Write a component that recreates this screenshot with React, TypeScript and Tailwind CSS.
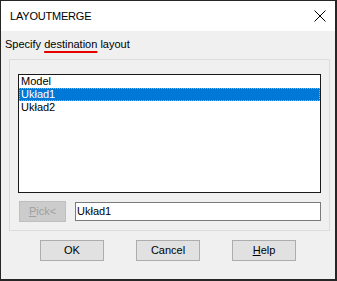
import React from "react";

export default function App() {
  const font = { fontFamily: '"Liberation Sans", Arial, sans-serif' };
  return (
    <div
      className="w-[337px] h-[281px] border-l border-t border-r-2 border-b-2 border-[#262626] bg-[#f0f0f0] flex flex-col text-[11px] leading-[13px] text-black"
      style={font}
    >
      {/* Title bar */}
      <div className="h-[30px] bg-white flex items-center justify-between shrink-0">
        <span className="pl-[9px] text-[11px] tracking-[-0.2px] text-black">LAYOUTMERGE</span>
        <svg width="12" height="12" viewBox="0 0 12 12" className="mr-[9px]">
          <path d="M0.5 0.5 L11.5 11.5 M11.5 0.5 L0.5 11.5" stroke="#000" strokeWidth="1" fill="none" />
        </svg>
      </div>

      {/* Body */}
      <div className="flex flex-col">
        <div className="pl-[4px] pt-[7px] h-[20px]">
          Specify{" "}
          <span className="underline decoration-[#e60000] decoration-2 underline-offset-[3px]">destination</span>{" "}
          layout
        </div>

        <div className="ml-[8px] mr-[5px] mt-[8px] h-[172px] border border-[#dcdcdc] flex flex-col px-[8px] pt-[14px]">
          <div className="h-[119px] border border-[#1a1a1a] bg-white flex flex-col">
            <div className="h-[13px] pl-[2px]">Model</div>
            <div className="h-[13px] pl-[1px] bg-[#0078d7] text-white border border-dotted border-[#e8a040] leading-[11px]">
              Układ1
            </div>
            <div className="h-[13px] pl-[2px]">Układ2</div>
          </div>
          <div className="flex items-start mt-[8px]">
            <div className="ml-[1px] w-[47px] h-[21px] bg-[#cccccc] border border-[#bfbfbf] text-[#a0a0a0] flex items-center justify-center">
              <span>
                <span className="underline">P</span>ick&lt;
              </span>
            </div>
            <div className="ml-[9px] mt-[1px] w-[246px] h-[19px] bg-white border border-[#7a7a7a] flex items-center pl-[1px]">
              Układ1
            </div>
          </div>
        </div>

        <div className="flex mt-[9px] pl-[39px] gap-[32px]">
          <div className="w-[64px] h-[21px] bg-[#e1e1e1] border border-[#adadad] flex items-center justify-center">OK</div>
          <div className="w-[64px] h-[21px] bg-[#e1e1e1] border border-[#adadad] flex items-center justify-center">Cancel</div>
          <div className="w-[64px] h-[21px] bg-[#e1e1e1] border border-[#adadad] flex items-center justify-center">
            <span>
              <span className="underline">H</span>elp
            </span>
          </div>
        </div>
      </div>
    </div>
  );
}
